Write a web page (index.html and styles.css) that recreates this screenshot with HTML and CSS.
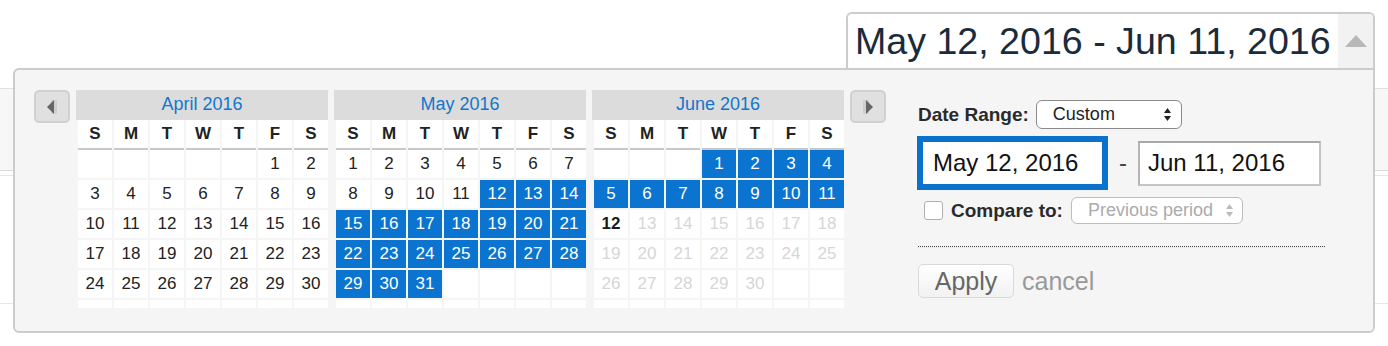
FILE: index.html
```html
<!DOCTYPE html>
<html lang="en">
<head>
<meta charset="utf-8">
<title>Date range picker</title>
<link rel="stylesheet" href="styles.css">
</head>
<body>
<div class="page">
  <header class="topbar">
    <div class="trigger">
      <div class="trigger-text">May 12, 2016 - Jun 11, 2016</div>
      <div class="trigger-arrow">
        <svg width="22" height="12" viewBox="0 0 22 12"><polygon points="0,12 11,0 22,12" fill="#b8b8b8"/></svg>
      </div>
    </div>
  </header>
  <div class="bg-strip"></div>
  <div class="bg-rule"></div>
  <div class="bg-rule bg-rule-low"></div>
</div>

<div class="popup">
  <button class="nav nav-prev" aria-label="Previous month">
    <svg width="12" height="16" viewBox="0 0 12 16"><rect x="5" y="1" width="6" height="14" rx="1" fill="#cfcfcf"/><polygon points="1,8 8,1 8,15" fill="#666"/></svg>
  </button>

  <div class="month">
    <div class="month-title">April 2016</div>
    <div class="daynames"><span>S</span><span>M</span><span>T</span><span>W</span><span>T</span><span>F</span><span>S</span></div>
    <div class="dates">
      <span></span><span></span><span></span><span></span><span></span><span>1</span><span>2</span>
      <span>3</span><span>4</span><span>5</span><span>6</span><span>7</span><span>8</span><span>9</span>
      <span>10</span><span>11</span><span>12</span><span>13</span><span>14</span><span>15</span><span>16</span>
      <span>17</span><span>18</span><span>19</span><span>20</span><span>21</span><span>22</span><span>23</span>
      <span>24</span><span>25</span><span>26</span><span>27</span><span>28</span><span>29</span><span>30</span>
      <span></span><span></span><span></span><span></span><span></span><span></span><span></span>
    </div>
  </div>

  <div class="month">
    <div class="month-title">May 2016</div>
    <div class="daynames"><span>S</span><span>M</span><span>T</span><span>W</span><span>T</span><span>F</span><span>S</span></div>
    <div class="dates">
      <span>1</span><span>2</span><span>3</span><span>4</span><span>5</span><span>6</span><span>7</span>
      <span>8</span><span>9</span><span>10</span><span>11</span><span class="sel">12</span><span class="sel">13</span><span class="sel">14</span>
      <span class="sel">15</span><span class="sel">16</span><span class="sel">17</span><span class="sel">18</span><span class="sel">19</span><span class="sel">20</span><span class="sel">21</span>
      <span class="sel">22</span><span class="sel">23</span><span class="sel">24</span><span class="sel">25</span><span class="sel">26</span><span class="sel">27</span><span class="sel">28</span>
      <span class="sel">29</span><span class="sel">30</span><span class="sel">31</span><span></span><span></span><span></span><span></span>
      <span></span><span></span><span></span><span></span><span></span><span></span><span></span>
    </div>
  </div>

  <div class="month">
    <div class="month-title">June 2016</div>
    <div class="daynames"><span>S</span><span>M</span><span>T</span><span>W</span><span>T</span><span>F</span><span>S</span></div>
    <div class="dates">
      <span></span><span></span><span></span><span class="sel">1</span><span class="sel">2</span><span class="sel">3</span><span class="sel">4</span>
      <span class="sel">5</span><span class="sel">6</span><span class="sel">7</span><span class="sel">8</span><span class="sel">9</span><span class="sel">10</span><span class="sel">11</span>
      <span class="today">12</span><span class="off">13</span><span class="off">14</span><span class="off">15</span><span class="off">16</span><span class="off">17</span><span class="off">18</span>
      <span class="off">19</span><span class="off">20</span><span class="off">21</span><span class="off">22</span><span class="off">23</span><span class="off">24</span><span class="off">25</span>
      <span class="off">26</span><span class="off">27</span><span class="off">28</span><span class="off">29</span><span class="off">30</span><span></span><span></span>
      <span></span><span></span><span></span><span></span><span></span><span></span><span></span>
    </div>
  </div>

  <button class="nav nav-next" aria-label="Next month">
    <svg width="12" height="16" viewBox="0 0 12 16"><rect x="1" y="1" width="6" height="14" rx="1" fill="#cfcfcf"/><polygon points="11,8 4,1 4,15" fill="#666"/></svg>
  </button>

  <div class="panel">
    <div class="row-range">
      <span class="label">Date Range:</span>
      <div class="select select-range">
        <span>Custom</span>
        <svg width="7" height="13" viewBox="0 0 7 13"><polygon points="0,5 3.5,0 7,5" fill="#222"/><polygon points="0,8 7,8 3.5,13" fill="#222"/></svg>
      </div>
    </div>
    <div class="row-dates">
      <div class="input input-start">May 12, 2016</div>
      <span class="dash">-</span>
      <div class="input input-end">Jun 11, 2016</div>
    </div>
    <div class="row-compare">
      <span class="checkbox"></span>
      <span class="label">Compare to:</span>
      <div class="select select-compare">
        <span>Previous period</span>
        <svg width="7" height="13" viewBox="0 0 7 13"><polygon points="0,5 3.5,0 7,5" fill="#bbb"/><polygon points="0,8 7,8 3.5,13" fill="#bbb"/></svg>
      </div>
    </div>
    <div class="divider"></div>
    <div class="row-actions">
      <button class="apply">Apply</button>
      <span class="cancel">cancel</span>
    </div>
  </div>
</div>
</body>
</html>
```

FILE: styles.css
```css
* { box-sizing: border-box; }
html, body { margin: 0; padding: 0; }
body {
  width: 1388px;
  height: 346px;
  overflow: hidden;
  position: relative;
  background: #fff;
  font-family: "Liberation Sans", Arial, Helvetica, sans-serif;
  color: #222;
}

/* background page */
.topbar {
  height: 68px;
  padding: 12px 13px 0 0;
  display: flex;
  justify-content: flex-end;
}
.trigger {
  width: 529px;
  height: 56px;
  border: 2px solid #ccc;
  border-bottom: none;
  border-radius: 6px 6px 0 0;
  background: #fff;
  display: flex;
}
.trigger-text {
  flex: 1;
  padding-left: 7px;
  font-size: 37.6px;
  line-height: 54px;
  color: #1a2b3c;
  white-space: nowrap;
  overflow: hidden;
}
.trigger-arrow {
  width: 35px;
  background: #f2f2f2;
  display: flex;
  align-items: center;
  justify-content: center;
  border-top-right-radius: 4px;
}
.bg-strip {
  margin-top: 20px;
  height: 83px;
  background: #f7f7f7;
  border-top: 1px solid #e2e2e2;
  border-bottom: 1px solid #dadada;
}
.bg-rule { margin-top: 4px; height: 1px; background: #e6e6e6; }
.bg-rule-low { margin-top: 127px; }

/* popup */
.popup {
  position: absolute;
  left: 13px;
  top: 68px;
  width: 1362px;
  height: 265px;
  background: #f5f5f5;
  border: 2px solid #ccc;
  border-radius: 6px 0 6px 6px;
  display: flex;
  align-items: flex-start;
  padding: 20px 0 0 19px;
}
.nav {
  width: 36px;
  height: 33px;
  margin: 0;
  padding: 0;
  background: #e0e0e0;
  border: 2px solid #d0d0d0;
  border-radius: 5px;
  display: flex;
  align-items: center;
  justify-content: center;
}
.month { width: 252px; margin-left: 6px; }
.nav-next { margin-left: 6px; }
.month-title {
  height: 30px;
  background: #dcdcdc;
  color: #1177cc;
  font-size: 18px;
  line-height: 29px;
  text-align: center;
}
.daynames, .dates {
  display: grid;
  grid-template-columns: repeat(7, 34px);
  column-gap: 2px;
  padding-left: 2px;
}
.daynames span {
  height: 30px;
  background: #fff;
  border-bottom: 2px solid #c8c8c8;
  font-weight: bold;
  font-size: 17px;
  line-height: 28px;
  text-align: center;
  color: #222;
}
.dates {
  grid-auto-rows: 28px;
  row-gap: 2px;
  height: 158px;
  overflow: hidden;
}
.dates span {
  background: #fff;
  font-size: 17px;
  line-height: 28px;
  text-align: center;
  color: #222;
}
.dates .sel { background: #0a74d0; color: #fff; }
.dates .off { color: #d6d6d6; }
.dates .today { font-weight: bold; color: #1a1a1a; }

/* right panel */
.panel {
  margin-left: 32px;
  padding-top: 10px;
  width: 408px;
  display: flex;
  flex-direction: column;
}
.label { font-weight: bold; font-size: 19px; color: #2a2a2a; }
.row-range { display: flex; align-items: center; height: 29px; }
.select {
  display: flex;
  align-items: center;
  justify-content: space-between;
  background: #fff;
  border-radius: 6px;
  font-size: 18px;
}
.select-range {
  margin-left: 7px;
  width: 146px;
  height: 29px;
  border: 1px solid #8a8a8a;
  padding: 0 10px 0 16px;
  color: #222;
}
.row-dates { display: flex; align-items: center; margin-top: 7px; height: 54px; }
.input {
  background: #fff;
  font-size: 24px;
  color: #111;
  display: flex;
  align-items: center;
}
.input-start {
  margin-left: -1px;
  width: 191px;
  height: 54px;
  border: 6px solid #0a72cc;
  padding-left: 10px;
}
.dash { font-size: 24px; color: #444; margin: 0 11px; }
.input-end {
  width: 183px;
  height: 45px;
  border: 2px solid #c4c4c4;
  border-top-color: #a8a8a8;
  border-left-color: #b4b4b4;
  padding-left: 8px;
}
.row-compare { display: flex; align-items: center; margin-top: 7px; height: 27px; }
.checkbox {
  margin-left: 6px;
  width: 19px;
  height: 19px;
  background: #fff;
  border: 1px solid #b0b0b0;
  border-radius: 3px;
  margin-right: 8px;
}
.select-compare {
  margin-left: 8px;
  width: 172px;
  height: 27px;
  border: 1px solid #bdbdbd;
  padding: 0 9px 0 16px;
  color: #ababab;
}
.divider {
  margin-top: 22px;
  width: 408px;
  height: 2px;
  background-image: linear-gradient(to right, #444 1px, transparent 1px);
  background-size: 2px 2px;
  background-repeat: repeat-x;
  border-bottom: 1px solid #ececec;
}
.row-actions { display: flex; align-items: center; margin-top: 16px; }
.apply {
  width: 96px;
  height: 34px;
  margin: 0;
  padding: 0;
  border: 1px solid #dadada;
  border-radius: 5px;
  background: linear-gradient(#ffffff, #f1f1f1);
  font-family: "Liberation Sans", Arial, Helvetica, sans-serif;
  font-size: 25px;
  color: #666;
}
.cancel { margin-left: 8px; font-size: 25px; color: #999; }
```
